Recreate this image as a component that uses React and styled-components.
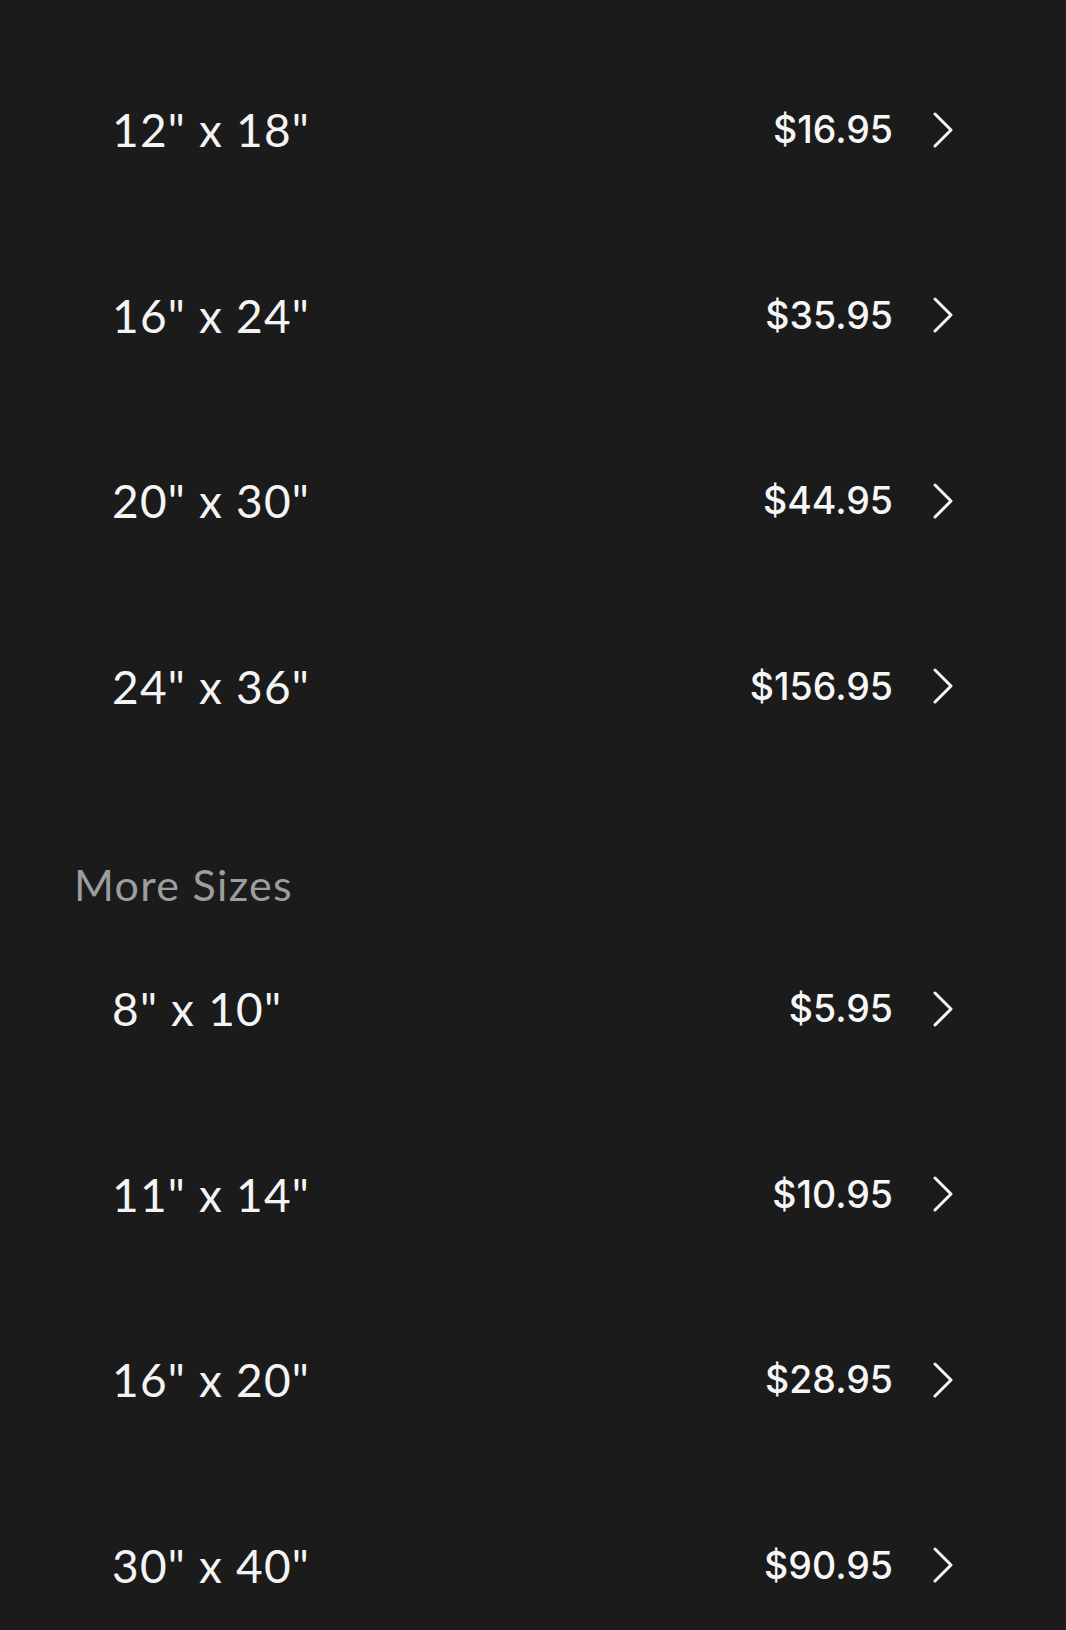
import React from "react";
import styled, { createGlobalStyle } from "styled-components";

const Global = createGlobalStyle`
  html, body { margin: 0; padding: 0; background: #1b1b1b; }
  body { overflow: hidden; }
`;

const Page = styled.div`
  background: #1b1b1b;
  min-height: 1630px;
  padding: 37px 113px 0 0;
  box-sizing: border-box;
`;

const Section = styled.section`
  display: flex;
  flex-direction: column;
`;

const SectionTitle = styled.h2`
  margin: 76px 0 1px 0;
  padding-left: 74px;
  height: 60px;
  line-height: 60px;
  font-family: "Lato", "Noto Sans", sans-serif;
  font-weight: 400;
  font-size: 43px;
  letter-spacing: 1.3px;
  color: #9d9d9d;
`;

const Row = styled.div`
  display: flex;
  align-items: center;
  justify-content: space-between;
  height: 185.5px;
  padding-left: 112px;
  cursor: pointer;
`;

const Label = styled.span`
  font-family: "Lato", "Noto Sans", sans-serif;
  font-weight: 400;
  font-size: 46px;
  color: #f4f4f4;
  letter-spacing: 1.2px;
`;

const Right = styled.div`
  display: flex;
  align-items: center;
  gap: 40px;
`;

const Price = styled.span`
  font-family: "Inter", "Noto Sans", sans-serif;
  font-weight: 500;
  font-size: 37.5px;
  color: #f6f6f6;
`;

const Chevron = () => (
  <svg width="20" height="36" viewBox="0 0 20 36" fill="none">
    <polyline points="2,2 18,18 2,34" stroke="#f6f6f6" strokeWidth="3" strokeLinecap="round" strokeLinejoin="round" />
  </svg>
);

const main = [
  ["12\" x 18\"", "$16.95"],
  ["16\" x 24\"", "$35.95"],
  ["20\" x 30\"", "$44.95"],
  ["24\" x 36\"", "$156.95"],
];
const more = [
  ["8\" x 10\"", "$5.95"],
  ["11\" x 14\"", "$10.95"],
  ["16\" x 20\"", "$28.95"],
  ["30\" x 40\"", "$90.95"],
];

const SizeRow = ({ label, price }) => (
  <Row>
    <Label>{label}</Label>
    <Right>
      <Price>{price}</Price>
      <Chevron />
    </Right>
  </Row>
);

export default function App() {
  return (
    <>
      <Global />
      <Page>
        <Section>
          {main.map(([l, p]) => <SizeRow key={l} label={l} price={p} />)}
        </Section>
        <Section>
          <SectionTitle>More Sizes</SectionTitle>
          {more.map(([l, p]) => <SizeRow key={l} label={l} price={p} />)}
        </Section>
      </Page>
    </>
  );
}
